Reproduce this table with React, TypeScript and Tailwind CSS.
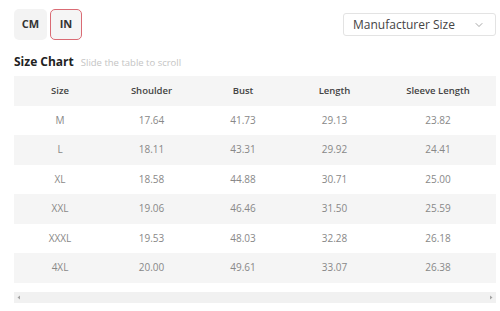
import { ChevronDown } from 'lucide-react';

const rows = [
  ['M', '17.64', '41.73', '29.13', '23.82'],
  ['L', '18.11', '43.31', '29.92', '24.41'],
  ['XL', '18.58', '44.88', '30.71', '25.00'],
  ['XXL', '19.06', '46.46', '31.50', '25.59'],
  ['XXXL', '19.53', '48.03', '32.28', '26.18'],
  ['4XL', '20.00', '49.61', '33.07', '26.38'],
];

const headers = ['Size', 'Shoulder', 'Bust', 'Length', 'Sleeve Length'];
const widths = ['w-[92px]', 'w-[91px]', 'w-[92px]', 'w-[91px]', 'w-[116px]'];

export default function App() {
  return (
    <div className="w-[500px] h-[311px] bg-white pl-[14px] pr-[4px] pt-[9px] font-['Open_Sans',sans-serif] overflow-hidden">
      <div className="flex items-start justify-between">
        <div className="flex gap-[3px]">
          <button className="w-[33px] h-[31px] rounded-[5px] bg-[#f3f3f3] text-[11px] font-bold text-[#333]">CM</button>
          <button className="w-[32px] h-[31px] rounded-[5px] bg-[#f5f5f5] border border-[#da6b74] text-[11px] font-bold text-[#333]">IN</button>
        </div>
        <div className="mt-[4px] w-[153px] h-[23px] border border-[#e3e3e3] rounded-[3px] flex items-center justify-between pl-[9px] pr-[10px]">
          <span className="text-[12px] text-[#444]">Manufacturer Size</span>
          <ChevronDown size={12} strokeWidth={1.3} className="text-[#777]" />
        </div>
      </div>

      <div className="flex items-baseline gap-[7px] mt-[13px]">
        <h2 className="text-[12px] font-bold text-[#222]">Size Chart</h2>
        <span className="text-[9.5px] text-[#c4c4c4]">Slide the table to scroll</span>
      </div>

      <div className="mt-[5px]">
        <div className="flex h-[29.5px] items-center bg-[#f5f5f5] text-[9.5px] font-semibold text-[#444]">
          {headers.map((h, i) => (
            <div key={h} className={`${widths[i]} text-center`}>{h}</div>
          ))}
        </div>
        {rows.map((r, ri) => (
          <div
            key={r[0]}
            className={ri % 2 === 1 ? 'flex h-[29.5px] items-center bg-[#f5f5f5] text-[10px] text-[#888]' : 'flex h-[29.5px] items-center bg-white text-[10px] text-[#888]'}
          >
            {r.map((c, i) => (
              <div key={i} className={`${widths[i]} text-center`}>{c}</div>
            ))}
          </div>
        ))}
      </div>

      <div className="mt-[9px] h-[11px] bg-[#f1f1f1] flex items-center justify-between px-[3px]">
        <svg width="4" height="5" viewBox="0 0 4 5"><path d="M3 0.5 L0.5 2.5 L3 4.5 Z" fill="#a3a3a3" /></svg>
        <svg width="4" height="5" viewBox="0 0 4 5"><path d="M1 0.5 L3.5 2.5 L1 4.5 Z" fill="#a3a3a3" /></svg>
      </div>
    </div>
  );
}
